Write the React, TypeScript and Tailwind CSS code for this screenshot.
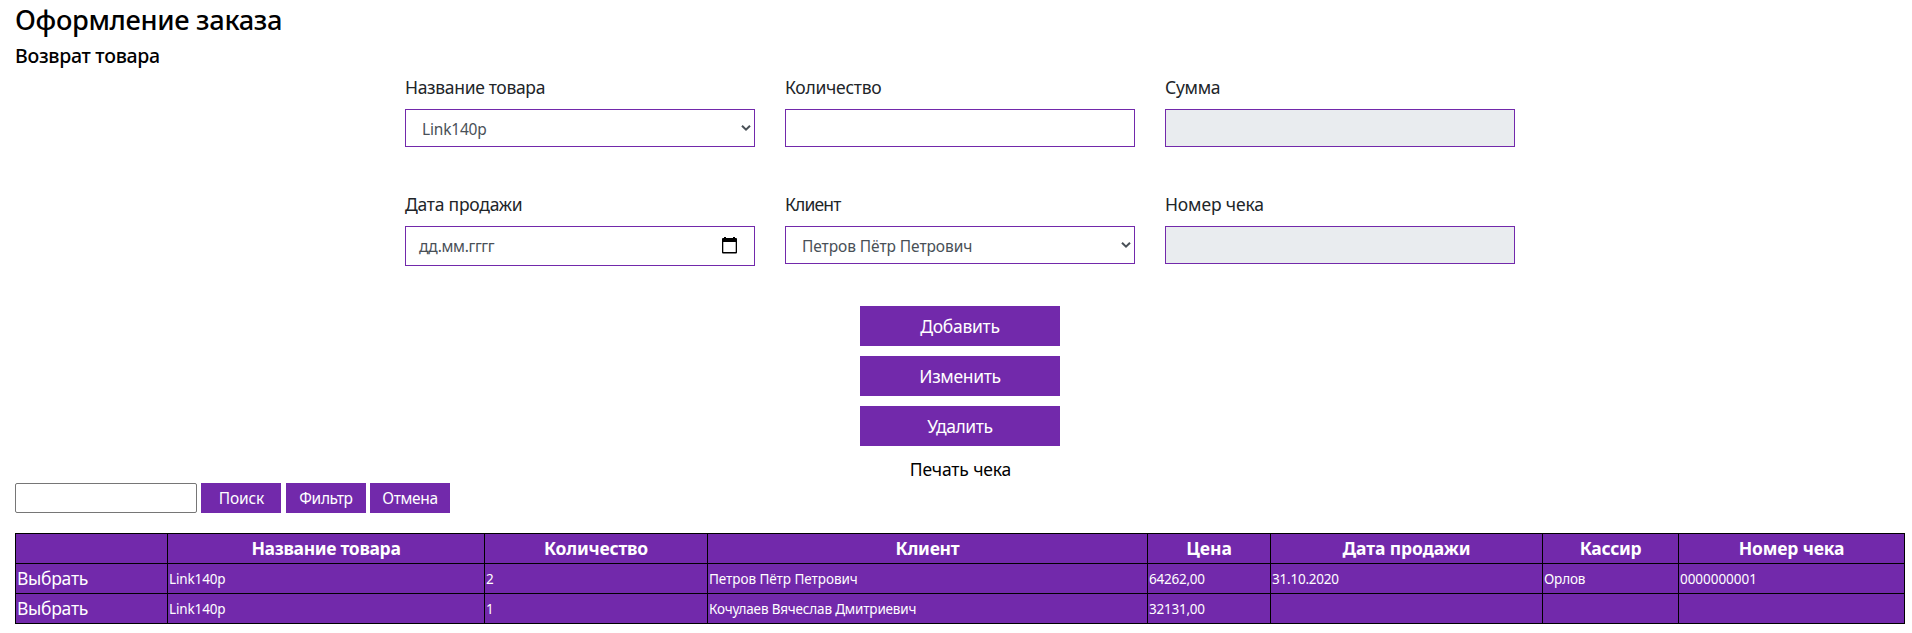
import type { ReactNode } from 'react';

function Chevron() {
  return (
    <svg className="pointer-events-none mr-[4px] self-center justify-self-end [grid-area:1/1]" width="10" height="8" viewBox="0 0 10 8" fill="none">
      <path d="M1 1.7 L5 5.7 L9 1.7" stroke="#495057" strokeWidth="2" />
    </svg>
  );
}

function Field({ label, track, children }: { label: string; track: string; children: ReactNode }) {
  return (
    <div className="flex flex-col items-stretch">
      <label className={`mb-2 h-[27px] text-[17.5px] leading-[27px] text-[#212529] ${track}`}>{label}</label>
      {children}
    </div>
  );
}

function Select({ value, track }: { value: string; track: string }) {
  return (
    <div className="grid h-[38px]">
      <select className={`h-[38px] w-full appearance-none border border-[#7229ab] bg-white pt-[4px] pl-[16px] text-[15.5px] text-[#495057] outline-none [grid-area:1/1] ${track}`}>
        <option>{value}</option>
      </select>
      <Chevron />
    </div>
  );
}

const actions = [
  { text: 'Добавить', track: 'tracking-[-0.28px]' },
  { text: 'Изменить', track: 'tracking-[-0.33px]' },
  { text: 'Удалить', track: 'tracking-[-0.39px]' },
];

const columns = [
  { text: '', width: 'w-[151px]', track: '' },
  { text: 'Название товара', width: 'w-[316px]', track: 'tracking-[-0.31px]' },
  { text: 'Количество', width: 'w-[222px]', track: 'tracking-[-0.21px]' },
  { text: 'Клиент', width: 'w-[439px]', track: 'tracking-[-0.25px]' },
  { text: 'Цена', width: 'w-[122px]', track: '' },
  { text: 'Дата продажи', width: 'w-[271px]', track: 'tracking-[-0.08px]' },
  { text: 'Кассир', width: 'w-[135px]', track: 'tracking-[-0.3px]' },
  { text: 'Номер чека', width: 'w-[225px]', track: 'tracking-[-0.14px]' },
];

const rows = [
  [
    { text: 'Link140p', track: 'tracking-[-0.14px]' },
    { text: '2', track: '' },
    { text: 'Петров Пётр Петрович', track: 'tracking-[-0.05px]' },
    { text: '64262,00', track: 'tracking-[-0.24px]' },
    { text: '31.10.2020', track: 'tracking-[-0.22px]' },
    { text: 'Орлов', track: 'tracking-[-0.16px]' },
    { text: '0000000001', track: 'tracking-[-0.04px]' },
  ],
  [
    { text: 'Link140p', track: 'tracking-[-0.14px]' },
    { text: '1', track: '' },
    { text: 'Кочулаев Вячеслав Дмитриевич', track: 'tracking-[-0.17px]' },
    { text: '32131,00', track: 'tracking-[-0.24px]' },
    { text: '', track: '' },
    { text: '', track: '' },
    { text: '', track: '' },
  ],
];

export default function App() {
  return (
    <div className="h-[633px] overflow-hidden bg-white pt-[3px] pl-[15px] font-['Noto_Sans',sans-serif] text-black">
      <h2 className="h-[34px] text-[27.25px] leading-[34px] font-medium tracking-[-0.32px]">Оформление заказа</h2>
      <h5 className="mt-[7px] h-[24px] text-[19.5px] leading-[24px] font-medium tracking-[-0.28px]">Возврат товара</h5>

      <div className="mt-[6px] ml-[390px] grid grid-cols-[350px_350px_350px] gap-x-[30px] gap-y-[44px]">
        <Field label="Название товара" track="tracking-[-0.33px]">
          <Select value="Link140p" track="tracking-[-0.19px]" />
        </Field>
        <Field label="Количество" track="tracking-[-0.27px]">
          <input className="h-[38px] border border-[#7229ab] bg-white px-3 outline-none" />
        </Field>
        <Field label="Сумма" track="tracking-[-0.3px]">
          <input disabled className="h-[38px] border border-[#7229ab] bg-[#e9ecef] px-3" />
        </Field>
        <Field label="Дата продажи" track="tracking-[-0.24px]">
          <div className="flex h-[40px] items-center justify-between border border-[#7229ab] pr-[17px] pl-[13px] text-[15.5px] tracking-[-0.35px] text-[#495057]">
            <span className="pt-[2px]">дд.мм.гггг</span>
            <svg width="15" height="17" viewBox="0 0 15 17" className="mb-[2px]">
              <path fill="#000" d="M2 0h2v1h7V0h2v1h1a1 1 0 0 1 1 1v13.5a1 1 0 0 1-1 1H1a1 1 0 0 1-1-1V2a1 1 0 0 1 1-1h1zM1.3 5v10h12.4V5z" />
            </svg>
          </div>
        </Field>
        <Field label="Клиент" track="tracking-[-0.85px]">
          <Select value="Петров Пётр Петрович" track="tracking-[-0.08px]" />
        </Field>
        <Field label="Номер чека" track="tracking-[-0.15px]">
          <input disabled className="h-[38px] border border-[#7229ab] bg-[#e9ecef] px-3" />
        </Field>
      </div>

      <div className="mt-10 ml-[845px] flex w-[200px] flex-col gap-[10px] text-[17.5px]">
        {actions.map((a) => (
          <button key={a.text} className={`h-[40px] bg-[#7229ab] text-white ${a.track}`}>{a.text}</button>
        ))}
        <a className="h-[27px] pl-px text-center leading-[27px] tracking-[-0.15px]">Печать чека</a>
      </div>

      <div className="flex h-[30px] text-[15.5px] text-white">
        <input className="h-[30px] w-[182px] rounded-[2px] border border-[#767676] bg-white px-1 text-black outline-none" />
        <button className="ml-[4px] w-[80px] bg-[#7229ab] pt-[2px] pl-px tracking-[-0.16px]">Поиск</button>
        <button className="ml-[5px] w-[80px] bg-[#7229ab] pt-[2px] tracking-[-0.37px]">Фильтр</button>
        <button className="ml-[4px] w-[80px] bg-[#7229ab] pt-[2px] tracking-[-0.33px]">Отмена</button>
      </div>

      <table className="mt-5 w-[1890px] table-fixed border-separate border-spacing-px bg-black text-left text-white">
        <thead>
          <tr className="h-[29px]">
            {columns.map((c, i) => (
              <th key={i} className={`bg-[#7229ab] p-0 text-center text-[17.5px] leading-[29px] font-bold ${c.width} ${c.track}`}>{c.text}</th>
            ))}
          </tr>
        </thead>
        <tbody>
          {rows.map((r, i) => (
            <tr key={i} className="h-[29px]">
              <td className="bg-[#7229ab] p-0 pl-px text-[17.5px] leading-[29px] tracking-[-0.28px]">Выбрать</td>
              {r.map((c, j) => (
                <td key={j} className={`bg-[#7229ab] p-0 pt-px pl-px text-[13.5px] leading-[28px] ${c.track}`}>{c.text}</td>
              ))}
            </tr>
          ))}
        </tbody>
      </table>
    </div>
  );
}
